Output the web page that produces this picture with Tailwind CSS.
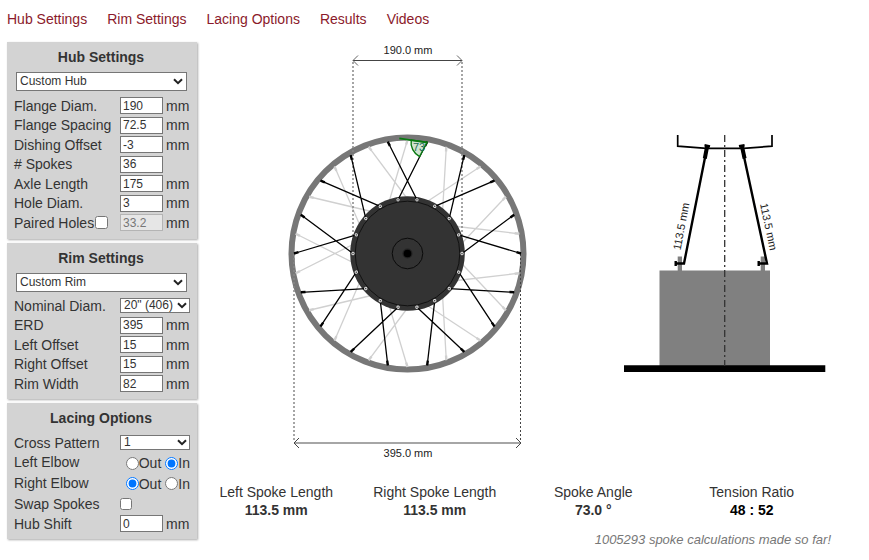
<!DOCTYPE html>
<html lang="en">
<head>
<meta charset="utf-8">
<meta name="viewport" content="width=device-width, initial-scale=1">
<title>Spoke Calculator</title>
<script src="https://cdn.jsdelivr.net/npm/@tailwindcss/browser@4"></script>
</head>
<body class="bg-white pl-[7px] pr-[38px] font-['Liberation_Sans',Arial,sans-serif] text-[14px] leading-[18px] text-[#333]">

<nav class="flex h-[42px] gap-5 pt-[10px] text-[#8b1a2b]">
  <a href="#hub">Hub Settings</a>
  <a href="#rim">Rim Settings</a>
  <a href="#lacing">Lacing Options</a>
  <a href="#results">Results</a>
  <a href="#videos">Videos</a>
</nav>

<div class="flex items-start">
  <form class="flex w-[190px] shrink-0 flex-col gap-1">

    <section id="hub" class="bg-[#d3d3d3] pb-[7px] shadow-[1px_1px_2px_#aaa]">
      <h2 class="pr-[2px] text-center font-bold leading-[30px]">Hub Settings</h2>
      <div class="relative ml-[9px] mr-[10px]">
        <select aria-label="Hub" class="block h-[19px] w-full appearance-none border border-[#767676] bg-white pl-[3px] text-[12px] leading-[17px]"><option>Custom Hub</option></select>
        <svg class="pointer-events-none absolute right-1 top-[6px]" width="10" height="7" viewBox="0 0 10 7" fill="none" stroke="#222" stroke-width="2"><path d="M1 1.2 5 5.2 9 1.2"/></svg>
      </div>
      <div class="mt-[5px] flex flex-col pl-[7px] *:flex *:h-5 *:items-center *:odd:h-[19px]">
        <div><label for="fd" class="w-[106px]">Flange Diam.</label><input id="fd" value="190" class="mr-[3px] h-[17px] w-[43px] border border-[#767676] bg-white pl-[2px] text-[12px]">mm</div>
        <div><label for="fs" class="w-[106px]">Flange Spacing</label><input id="fs" value="72.5" class="mr-[3px] h-[17px] w-[43px] border border-[#767676] bg-white pl-[2px] text-[12px]">mm</div>
        <div><label for="do" class="w-[106px]">Dishing Offset</label><input id="do" value="-3" class="mr-[3px] h-[17px] w-[43px] border border-[#767676] bg-white pl-[2px] text-[12px]">mm</div>
        <div><label for="sp" class="w-[106px]"># Spokes</label><input id="sp" value="36" class="h-[17px] w-[43px] border border-[#767676] bg-white pl-[2px] text-[12px]"></div>
        <div><label for="al" class="w-[106px]">Axle Length</label><input id="al" value="175" class="mr-[3px] h-[17px] w-[43px] border border-[#767676] bg-white pl-[2px] text-[12px]">mm</div>
        <div><label for="hd" class="w-[106px]">Hole Diam.</label><input id="hd" value="3" class="mr-[3px] h-[17px] w-[43px] border border-[#767676] bg-white pl-[2px] text-[12px]">mm</div>
        <div><span class="flex w-[106px] items-center gap-px"><label for="ph">Paired Holes</label><input id="ph" type="checkbox" class="size-[13px]"></span><input aria-label="Paired hole distance" value="33.2" disabled class="mr-[3px] h-[17px] w-[43px] border border-[#b4b4b4] bg-[#e6e6e6] pl-[2px] text-[12px] text-[#777]">mm</div>
      </div>
    </section>

    <section id="rim" class="bg-[#d3d3d3] pb-[6px] shadow-[1px_1px_2px_#aaa]">
      <h2 class="pr-[2px] text-center font-bold leading-[30px]">Rim Settings</h2>
      <div class="relative ml-[9px] mr-[10px]">
        <select aria-label="Rim" class="block h-[19px] w-full appearance-none border border-[#767676] bg-white pl-[3px] text-[12px] leading-[17px]"><option>Custom Rim</option></select>
        <svg class="pointer-events-none absolute right-1 top-[6px]" width="10" height="7" viewBox="0 0 10 7" fill="none" stroke="#222" stroke-width="2"><path d="M1 1.2 5 5.2 9 1.2"/></svg>
      </div>
      <div class="mt-1 flex flex-col pl-[7px] *:flex *:h-5 *:items-center *:odd:h-[19px]">
        <div><label for="nd" class="w-[106px]">Nominal Diam.</label>
          <div class="relative w-[70px]">
            <select id="nd" class="block h-[15px] w-full appearance-none border border-[#767676] bg-white pl-[3px] text-[12px] leading-[13px]"><option>20" (406)</option></select>
            <svg class="pointer-events-none absolute right-[3px] top-1" width="10" height="7" viewBox="0 0 10 7" fill="none" stroke="#222" stroke-width="2"><path d="M1 1.2 5 5.2 9 1.2"/></svg>
          </div></div>
        <div><label for="erd" class="w-[106px]">ERD</label><input id="erd" value="395" class="mr-[3px] h-[17px] w-[43px] border border-[#767676] bg-white pl-[2px] text-[12px]">mm</div>
        <div><label for="lo" class="w-[106px]">Left Offset</label><input id="lo" value="15" class="mr-[3px] h-[17px] w-[43px] border border-[#767676] bg-white pl-[2px] text-[12px]">mm</div>
        <div><label for="ro" class="w-[106px]">Right Offset</label><input id="ro" value="15" class="mr-[3px] h-[17px] w-[43px] border border-[#767676] bg-white pl-[2px] text-[12px]">mm</div>
        <div><label for="rw" class="w-[106px]">Rim Width</label><input id="rw" value="82" class="mr-[3px] h-[17px] w-[43px] border border-[#767676] bg-white pl-[2px] text-[12px]">mm</div>
      </div>
    </section>

    <section id="lacing" class="bg-[#d3d3d3] pb-[6px] shadow-[1px_1px_2px_#aaa]">
      <h2 class="pr-[2px] text-center font-bold leading-[30px]">Lacing Options</h2>
      <div class="flex flex-col pl-[7px]">
        <div class="flex h-[19px] items-center"><label for="cp" class="w-[106px]">Cross Pattern</label>
          <div class="relative w-[70px]">
            <select id="cp" class="block h-[15px] w-full appearance-none border border-[#767676] bg-white pl-[3px] text-[12px] leading-[13px]"><option>1</option></select>
            <svg class="pointer-events-none absolute right-[3px] top-1" width="10" height="7" viewBox="0 0 10 7" fill="none" stroke="#222" stroke-width="2"><path d="M1 1.2 5 5.2 9 1.2"/></svg>
          </div></div>
        <div class="flex h-5 items-center" role="radiogroup" aria-labelledby="le"><span id="le" class="w-[106px]">Left Elbow</span>
          <span class="flex w-[70px] justify-end gap-1 pt-[2px]"><label class="flex items-center"><input type="radio" name="left" class="size-[13px]">Out</label><label class="flex items-center"><input type="radio" name="left" checked class="size-[13px]">In</label></span></div>
        <div class="flex h-[21px] items-center" role="radiogroup" aria-labelledby="re"><span id="re" class="w-[106px]">Right Elbow</span>
          <span class="flex w-[70px] justify-end gap-1 pt-[2px]"><label class="flex items-center"><input type="radio" name="right" checked class="size-[13px]">Out</label><label class="flex items-center"><input type="radio" name="right" class="size-[13px]">In</label></span></div>
        <div class="flex h-[21px] items-center"><label for="sw" class="w-[106px]">Swap Spokes</label><input id="sw" type="checkbox" class="size-[12px]"></div>
        <div class="flex h-[19px] items-center"><label for="hs" class="w-[106px]">Hub Shift</label><input id="hs" value="0" class="mr-[3px] h-[17px] w-[43px] border border-[#767676] bg-white pl-[2px] text-[12px]">mm</div>
      </div>
    </section>
  </form>

  <main id="results" class="min-w-0 flex-1">
    <div class="grid grid-cols-[1fr_213px] justify-items-center">
      <!-- Wheel, front view -->
      <svg width="241" height="420" viewBox="287 42 241 420" role="img" aria-label="Wheel front view">
        <defs>
          <!-- One crossed pair of spokes; the wheel repeats it every 40 degrees -->
          <g id="pair">
            <path d="M-9.46-53.67 19.71-111.78M9.46-53.67-19.71-111.78" stroke-width="1.3"/>
            <path d="M17.6-107.6 19.71-111.78M-17.6-107.6-19.71-111.78" stroke-width="2.4"/>
          </g>
          <g id="holes"><circle cx="-9.46" cy="-53.67" r="1.2"/><circle cx="9.46" cy="-53.67" r="1.2"/></g>
          <g id="lacing9">
            <use href="#pair"/><use href="#pair" transform="rotate(40)"/><use href="#pair" transform="rotate(80)"/>
            <use href="#pair" transform="rotate(120)"/><use href="#pair" transform="rotate(160)"/><use href="#pair" transform="rotate(200)"/>
            <use href="#pair" transform="rotate(240)"/><use href="#pair" transform="rotate(280)"/><use href="#pair" transform="rotate(320)"/>
          </g>
        </defs>
        <g transform="translate(407.5 253.5)" fill="none">
          <circle r="116" stroke="#777" stroke-width="6"/>
          <use href="#lacing9" stroke="#d0d0d0" transform="rotate(-10)"/>
        </g>
        <g stroke="#888" stroke-width="1.5" stroke-dasharray="2 2">
          <path d="M353 62V253M462 62V253M294 254V442"/><path d="M520.5 254V442" stroke="#444" stroke-width="1"/>
        </g>
        <g transform="translate(407.5 253.5)" fill="none">
          <circle r="57.3" fill="#333"/>
          <circle r="52.3" stroke="#111"/>
          <circle r="15.3" stroke="#0a0a0a"/>
          <circle r="5" fill="#222"/><circle r="3.8" fill="#000"/>
          <use href="#lacing9" stroke="#000"/>
          <g stroke="#ddd" stroke-width="1" fill="#333">
            <use href="#holes"/><use href="#holes" transform="rotate(40)"/><use href="#holes" transform="rotate(80)"/>
            <use href="#holes" transform="rotate(120)"/><use href="#holes" transform="rotate(160)"/><use href="#holes" transform="rotate(200)"/>
            <use href="#holes" transform="rotate(240)"/><use href="#holes" transform="rotate(280)"/><use href="#holes" transform="rotate(320)"/>
          </g>
        </g>
        <path d="M427 142.3 411.2 140A16 16 0 0 0 419.6 156.6Z" fill="#cfe3d0" stroke="#0a7a12" stroke-width="1.4"/>
        <path d="M399.3 138.3 427.5 142.6" stroke="#0a7a12" stroke-width="1.8"/>
        <text x="413" y="151" font-size="11" fill="#1c6b55">73</text>
        <g fill="none" stroke="#444">
          <path d="M353 60.5H462"/><path d="M358 55.5 353 60.5 358 65.5M457 55.5 462 60.5 457 65.5" stroke="#666"/>
          <path d="M294 443H521" stroke="#888" stroke-width="1.6"/><path d="M299 438 294 443 299 448M516 438 521 443 516 448"/>
        </g>
        <g font-size="11" fill="#222" text-anchor="middle"><text x="408" y="54">190.0 mm</text><text x="408" y="457">395.0 mm</text></g>
      </svg>

      <!-- Hub and rim cross section -->
      <svg width="203" height="420" viewBox="623 42 203 420" role="img" aria-label="Wheel cross section">
        <g fill="#808080"><path d="M659.5 270.5H770V366H659.5Z"/><path d="M677.7 256.5H682V271H677.7ZM760.7 256.5H765V271H760.7Z"/></g>
        <path d="M624 365.3H825.3V372H624Z"/>
        <g fill="none" stroke="#000">
          <path d="M677.7 135V146.2L706.5 148.3H743.5L772 146.2V135" stroke-width="1.7"/>
          <path d="M707.3 146 684 263.5H675.5M741.7 146 767 263.5H758.5" stroke-width="2.4"/>
          <path d="M707.2 146 704.8 158.5M741.9 146 744.6 158.5" stroke-width="4"/>
          <path d="M704.5 145.3 710 146.4M744.6 145.3 739 146.4" stroke-width="2.6"/>
          <path d="M675.7 261V266M758.7 261V266" stroke-width="2.4"/>
          <path d="M724.7 135V366" stroke="#333" stroke-width="1.3" stroke-dasharray="7 3 2 3"/>
        </g>
        <g font-size="11" fill="#222" text-anchor="middle">
          <text transform="translate(685 227) rotate(-79)">113.5 mm</text>
          <text transform="translate(765 227.5) rotate(78)">113.5 mm</text>
        </g>
      </svg>
    </div>

    <dl class="mt-[21px] grid grid-cols-4 text-center">
      <div><dt>Left Spoke Length</dt><dd class="font-bold">113.5 mm</dd></div>
      <div><dt>Right Spoke Length</dt><dd class="font-bold">113.5 mm</dd></div>
      <div><dt>Spoke Angle</dt><dd class="font-bold">73.0 °</dd></div>
      <div><dt>Tension Ratio</dt><dd class="font-bold text-black">48 : 52</dd></div>
    </dl>
    <p class="mt-3 text-right text-[13px] italic text-[#777]">1005293 spoke calculations made so far!</p>
  </main>
</div>
</body>
</html>
